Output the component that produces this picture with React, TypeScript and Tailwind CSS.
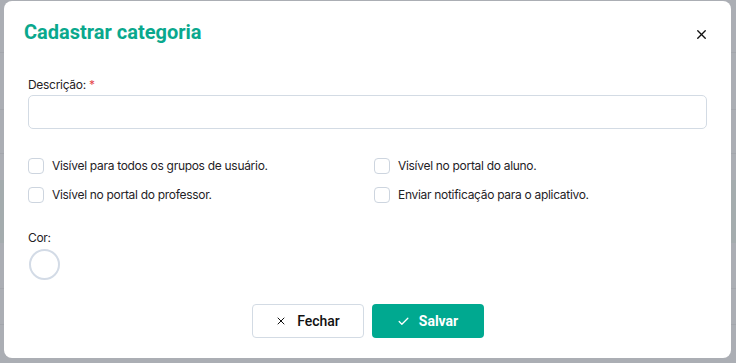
import React from 'react';
import { X, Check } from 'lucide-react';

const OPTIONS = [
  'Visível para todos os grupos de usuário.',
  'Visível no portal do aluno.',
  'Visível no portal do professor.',
  'Enviar notificação para o aplicativo.',
];

export default function App() {
  return (
    <div className="relative w-[736px] h-[363px] overflow-hidden bg-[#abaeb4]" style={{ fontFamily: 'Inter, "Noto Sans", sans-serif' }}>
      {/* table rows behind the overlay */}
      <div className="flex flex-col">
        <div className="h-[53px] border-b border-[#a3a6ac]" />
        <div className="h-[57px] border-b border-[#a3a6ac]" />
        <div className="h-[44px] border-b border-[#a3a6ac]" />
        <div className="h-[26px]" />
        <div className="h-[63px] bg-[#a4acae]" />
        <div className="h-[46px] border-b border-[#a3a6ac]" />
        <div className="h-[36px] border-b border-[#a3a6ac]" />
      </div>

      <div className="absolute left-[4px] top-[1px] w-[727px] h-[357px] bg-white rounded-lg flex flex-col">
        <div className="flex items-center justify-between pl-[20px] pr-[22px] pt-[18px]">
          <h1 className="text-[20px] leading-[26px] font-bold text-[#0aa88d]" style={{ fontFamily: 'Roboto, sans-serif' }}>
            Cadastrar categoria
          </h1>
          <X size={15} strokeWidth={2.2} className="text-[#111] mt-[5px]" />
        </div>

        <div className="px-[24px] mt-[33px] tracking-[-0.3px]">
          <label className="block text-[12px] leading-[14px] text-[#1f2226]">
            Descrição: <span className="text-[#e5484d]">*</span>
          </label>
          <div className="mt-[3px] h-[34px] border border-[#d3dbe4] rounded-[5px]" />

          <div className="grid grid-cols-[346px_1fr] gap-y-[13px] mt-[29px]">
            {OPTIONS.map((o) => (
              <div key={o} className="flex items-center gap-[8px]">
                <span className="w-[16px] h-[16px] border border-[#cdd5df] rounded-[4px] bg-white shrink-0" />
                <span className="text-[12px] leading-[16px] text-[#1f2226] whitespace-nowrap">{o}</span>
              </div>
            ))}
          </div>

          <label className="block text-[12px] leading-[14px] text-[#1f2226] mt-[28px]">Cor:</label>
          <div className="mt-[4px] ml-[1px] w-[31px] h-[31px] rounded-full border-2 border-[#d3dbe6]" />
        </div>

        <div className="flex justify-center gap-[8px] mt-[24px]">
          <button className="w-[112px] h-[34px] flex items-center justify-center gap-[10px] border border-[#d3dbe4] rounded-[4px] text-[14px] font-medium text-[#111]" style={{ fontFamily: 'Roboto, sans-serif' }}>
            <X size={12} strokeWidth={2} /> Fechar
          </button>
          <button className="w-[112px] h-[34px] flex items-center justify-center gap-[9px] bg-[#00a990] rounded-[4px] text-[14px] font-bold text-white" style={{ fontFamily: 'Roboto, sans-serif' }}>
            <Check size={13} strokeWidth={2.4} /> Salvar
          </button>
        </div>
      </div>
    </div>
  );
}
